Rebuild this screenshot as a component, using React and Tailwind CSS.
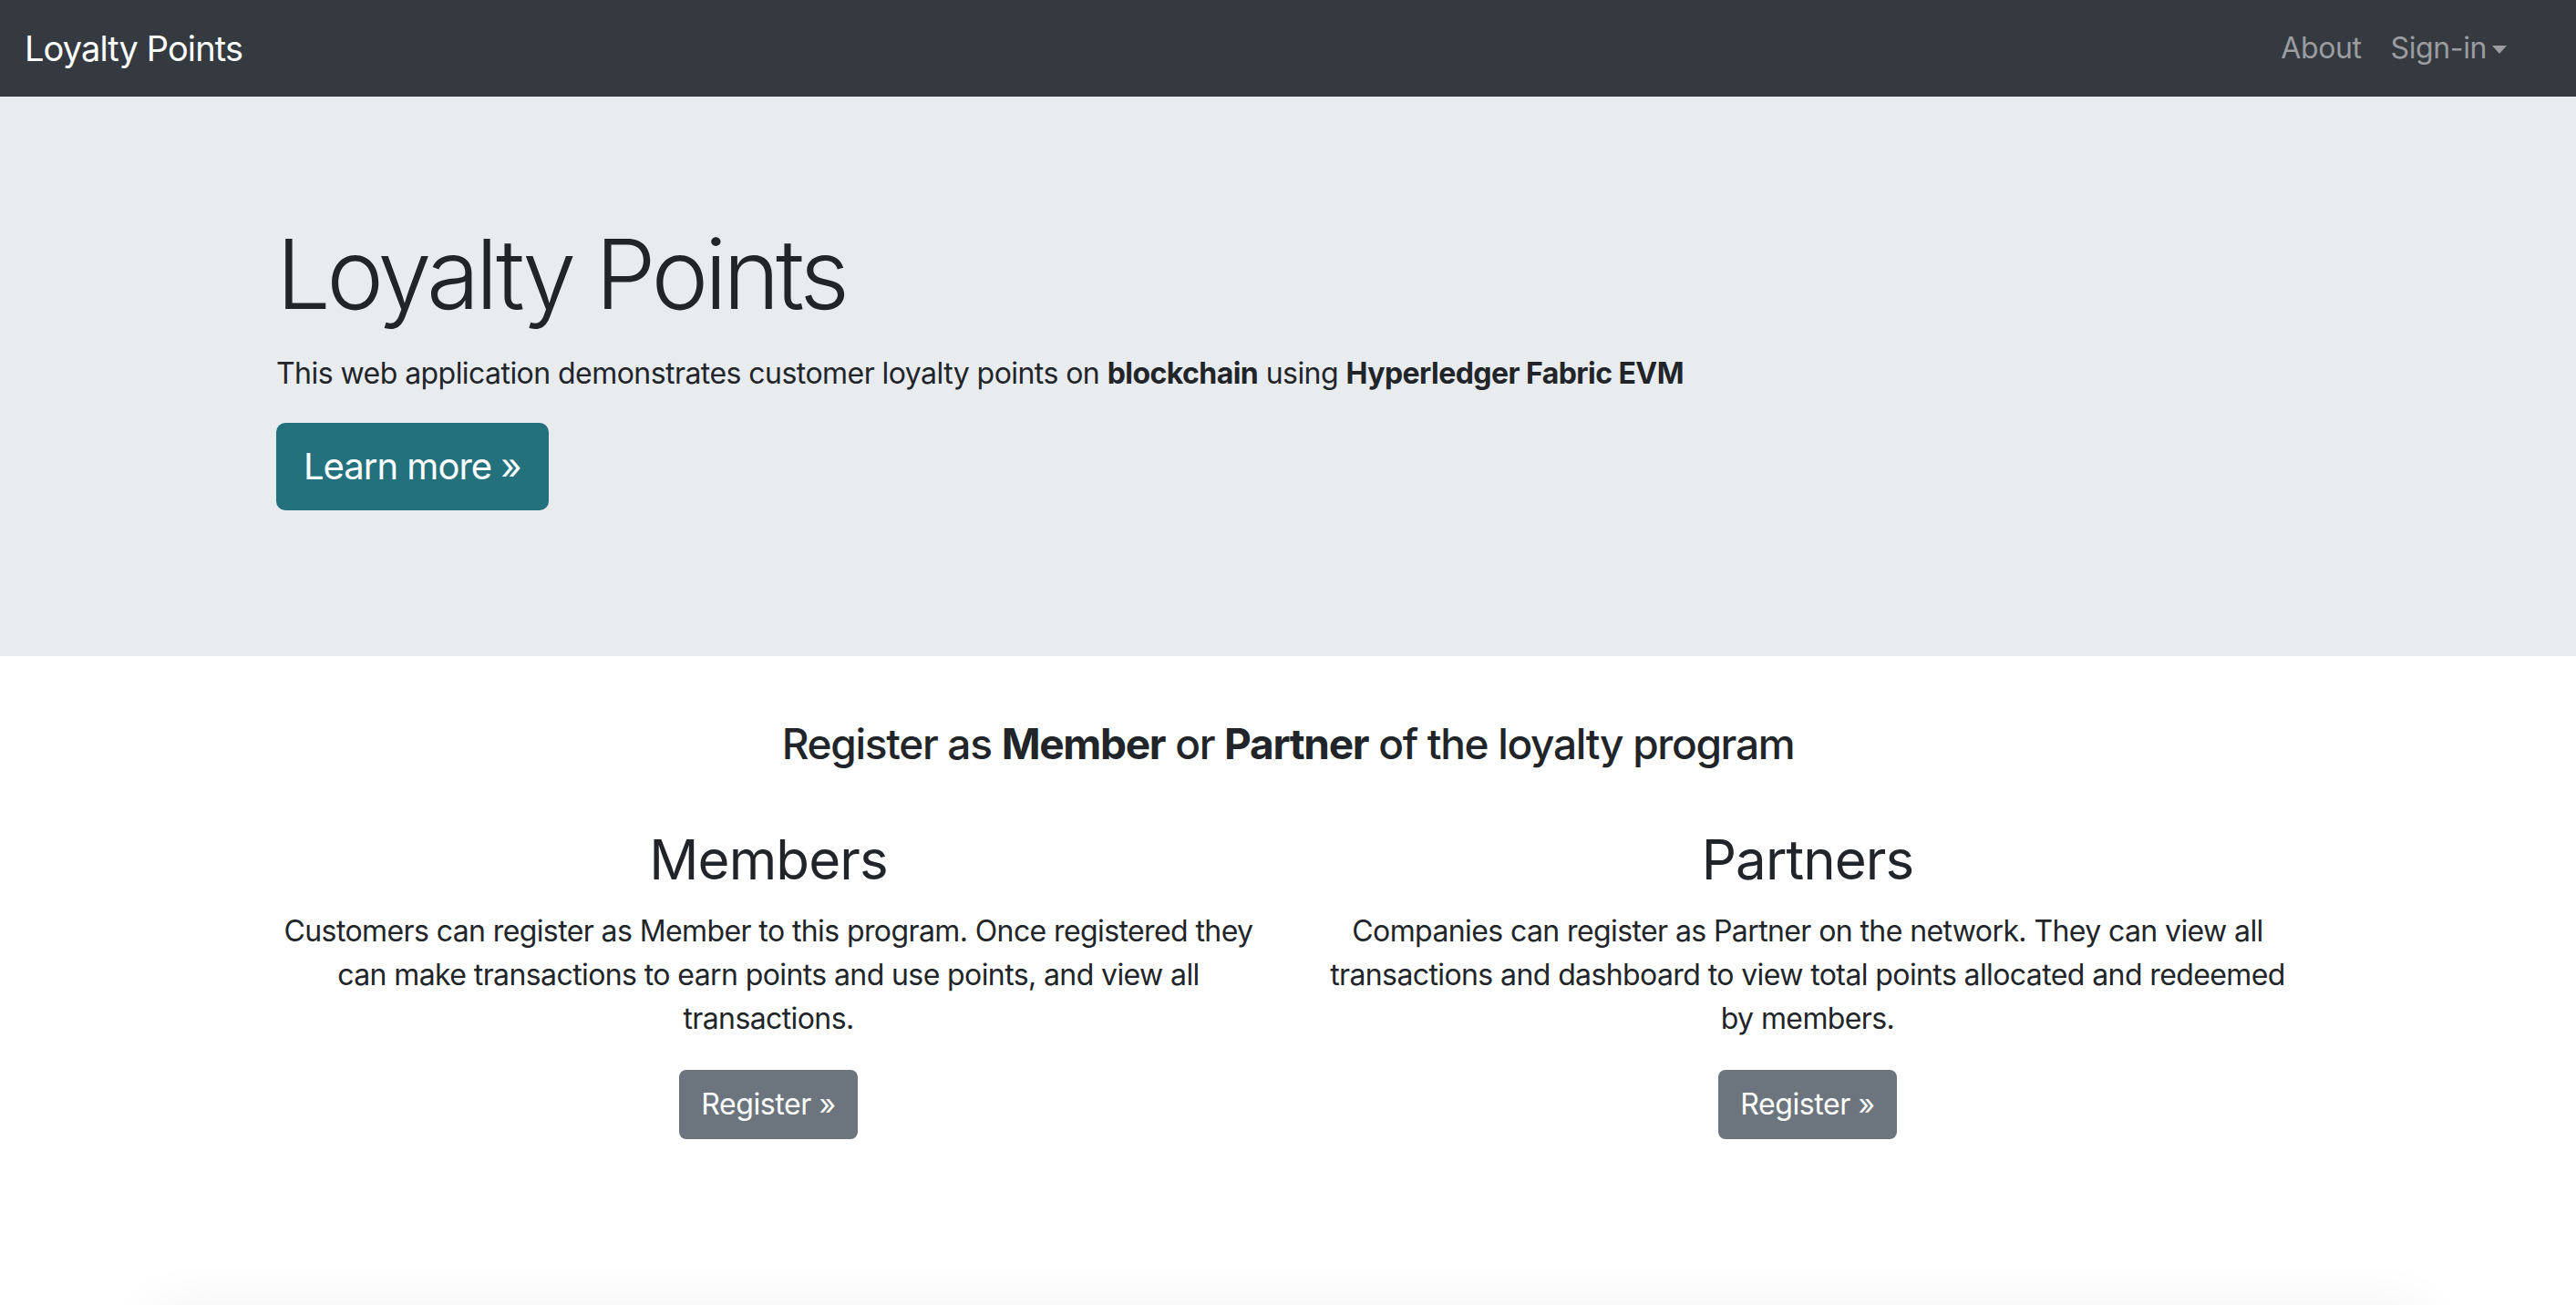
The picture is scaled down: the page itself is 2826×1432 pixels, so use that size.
export default function App() {
  const font = { fontFamily: 'Inter, "Noto Sans", sans-serif' };
  return (
    <div className="min-h-[1432px] bg-white text-[#212529] overflow-hidden" style={font}>
      <nav className="h-[106px] bg-[#343a40] flex items-center justify-between pl-[27px] pr-[76px]">
        <a className="text-white text-[38px] leading-[60px] tracking-[-0.9px]">Loyalty Points</a>
        <div className="flex items-center gap-[32px] text-[32px] text-[#9a9ca0] tracking-[-0.4px]">
          <span>About</span>
          <span className="flex items-center gap-[6px]">
            Sign-in
            <span className="inline-block w-0 h-0 border-l-[8px] border-r-[8px] border-t-[9px] border-l-transparent border-r-transparent border-t-[#9a9ca0] mt-[2px]"></span>
          </span>
        </div>
      </nav>

      <section className="bg-[#e9ecef] pt-[128px] pb-[128px] mb-[64px]">
        <div className="w-[2280px] mx-auto px-[30px]">
          <h1 className="text-[106px] leading-[134px] font-light mb-[16px] tracking-[-4.5px]">Loyalty Points</h1>
          <p className="text-[32px] leading-[48px] mb-[32px] tracking-[-0.55px] pt-[2px]">
            This web application demonstrates customer loyalty points on <b className="font-bold">blockchain</b> using <b className="font-bold">Hyperledger Fabric EVM</b>
          </p>
          <p className="mb-[32px] -mt-[2px]">
            <a className="inline-flex items-center h-[96px] px-[30px] rounded-[10px] bg-[#23717d] text-white text-[40px] tracking-[-1px]">Learn more »</a>
          </p>
        </div>
      </section>

      <div className="w-[2280px] mx-auto px-[30px]">
        <h3 className="text-center text-[46px] leading-[64px] font-medium mb-[57px] tracking-[-1.3px]">
          Register as <b className="font-bold">Member</b> or <b className="font-bold">Partner</b> of the loyalty program
        </h3>
        <div className="grid grid-cols-2 gap-[60px]">
          {[
            { t: 'Members', d: 'Customers can register as Member to this program. Once registered they can make transactions to earn points and use points, and view all transactions.' },
            { t: 'Partners', d: 'Companies can register as Partner on the network. They can view all transactions and dashboard to view total points allocated and redeemed by members.' },
          ].map((c) => (
            <div key={c.t} className="text-center">
              <h2 className="text-[60px] leading-[77px] font-normal mb-[16px] tracking-[-0.9px]">{c.t}</h2>
              <p className="text-[32px] leading-[48px] mb-[32px] tracking-[-0.6px]">{c.d}</p>
              <p>
                <a className="inline-flex items-center h-[76px] px-[24px] rounded-[8px] bg-[#6c757d] text-white text-[32px] tracking-[-0.4px]">Register »</a>
              </p>
            </div>
          ))}
        </div>
      </div>
      <div className="mt-[190px] mx-[170px] h-[200px] bg-white shadow-[0_0_60px_rgba(0,0,0,0.07)]"></div>
    </div>
  );
}
